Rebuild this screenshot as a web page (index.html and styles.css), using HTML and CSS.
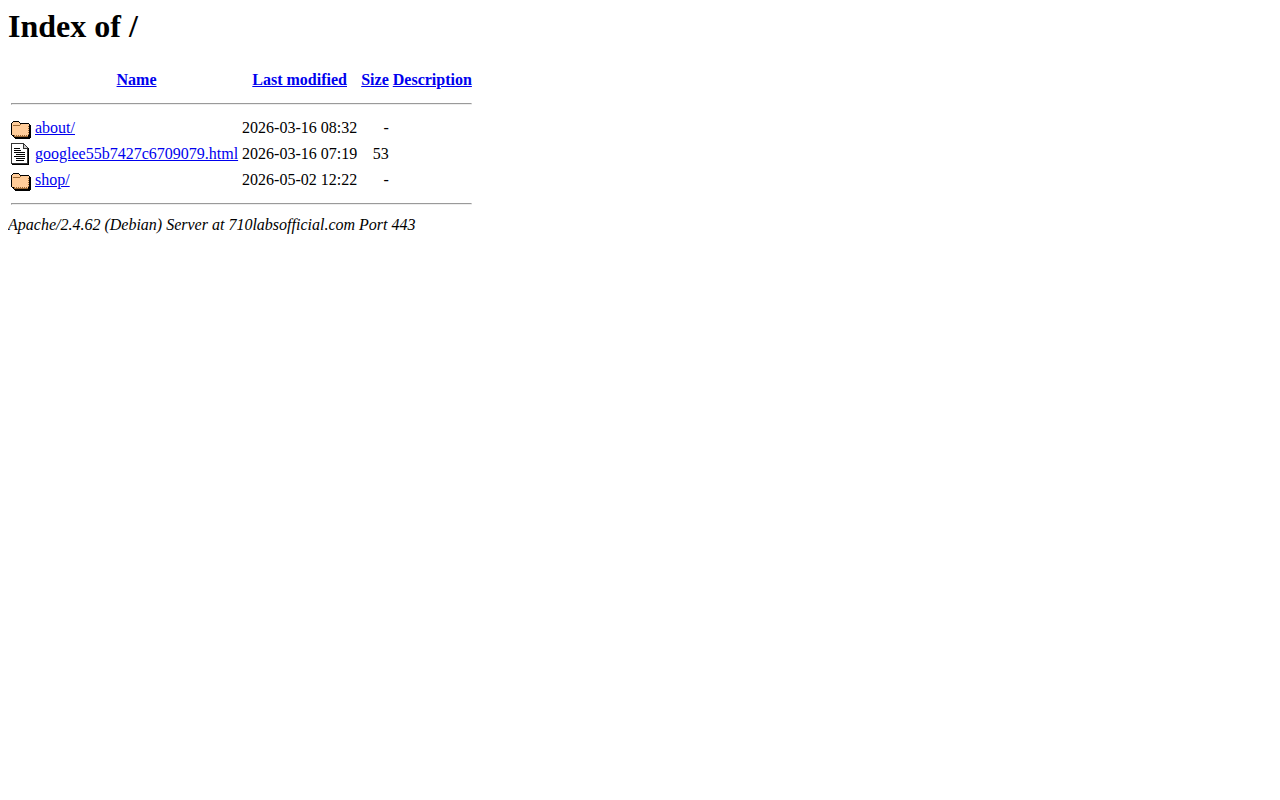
FILE: index.html
```
<!DOCTYPE html>
<html lang="en">
<head>
    <meta charset="UTF-8">
    <meta name="viewport" content="width=device-width, initial-scale=1.0">
    <title>Index of /</title>
    <link rel="stylesheet" href="styles.css">
</head>
<body>
    <!-- icons shared by the rows -->
    <svg class="sprites" aria-hidden="true">
        <symbol id="folder" viewBox="0 0 20 22">
            <path fill="#000" d="M2 4h6v1h1v1h9v1h1v1h1v13h-1v1H4v-1H3v-1H2v-1H1v-1H0V6h1V5h1z"/>
            <path fill="#ffcc99" d="M2 5h6v1h1v1h9v11h-1v1H3v-1H1V6h1z"/>
            <path fill="#996633" d="M2 8h7v1H2zM9 7h1v1H9zM3 19h14v1H3z"/>
            <path fill="#996633" d="M3 18h1v1H3zM5 18h1v1H5zM7 18h1v1H7zM9 18h1v1H9zM11 18h1v1h-1zM13 18h1v1h-1zM15 18h1v1h-1zM17 9h1v1h-1zM17 11h1v1h-1zM17 13h1v1h-1zM17 15h1v1h-1zM17 17h1v1h-1z"/>
        </symbol>
        <symbol id="text" viewBox="0 0 20 22">
            <path fill="#333" d="M0 0h13v1h1v1h1v1h1v1h1v1h1v17H1v-1H0z"/>
            <path fill="#fff" d="M1 1h11v5h4v14H1z"/>
            <path fill="#ccc" d="M13 2v3h3V4h-1V3h-1V2z"/>
            <path fill="#000" d="M17 5h1v17H1v-1h16zM3 5h6v1H3zM3 7h7v1H3zM3 9h11v1H3zM5 11h9v1H5zM3 13h11v1H3zM5 15h9v1H5zM5 17h8v1H5z"/>
        </symbol>
    </svg>

    <h1>Index of /</h1>
    <table>
        <tr>
            <th><svg class="icon" aria-hidden="true"></svg></th>
            <th><a href="?C=N;O=D">Name</a></th>
            <th><a href="?C=M;O=A">Last modified</a></th>
            <th><a href="?C=S;O=A">Size</a></th>
            <th><a href="?C=D;O=A">Description</a></th>
        </tr>
        <tr>
            <th colspan="5"><hr></th>
        </tr>
        <tr>
            <td><svg class="icon" role="img" aria-label="[DIR]"><use href="#folder"/></svg></td>
            <td><a href="about/">about/</a></td>
            <td class="right">2026-03-16 08:32</td>
            <td class="right">-</td>
            <td></td>
        </tr>
        <tr>
            <td><svg class="icon" role="img" aria-label="[TXT]"><use href="#text"/></svg></td>
            <td><a href="googlee55b7427c6709079.html">googlee55b7427c6709079.html</a></td>
            <td class="right">2026-03-16 07:19</td>
            <td class="right">53</td>
            <td></td>
        </tr>
        <tr>
            <td><svg class="icon" role="img" aria-label="[DIR]"><use href="#folder"/></svg></td>
            <td><a href="shop/">shop/</a></td>
            <td class="right">2026-05-02 12:22</td>
            <td class="right">-</td>
            <td></td>
        </tr>
        <tr>
            <th colspan="5"><hr></th>
        </tr>
    </table>
    <address>Apache/2.4.62 (Debian) Server at 710labsofficial.com Port 443</address>
</body>
</html>
```
FILE: styles.css
```
body {
    margin: 8px;
    background: #fff;
    color: #000;
    font-family: "Liberation Serif", "Times New Roman", serif;
    font-size: 16px;
}

h1 {
    margin: 0 0 21px;
    font-size: 32px;
}

a {
    color: #0000ee;
}

.sprites {
    display: none;
}

.icon {
    display: block;
    width: 20px;
    height: 22px;
    shape-rendering: crispEdges;
}

.right {
    text-align: right;
}
```
